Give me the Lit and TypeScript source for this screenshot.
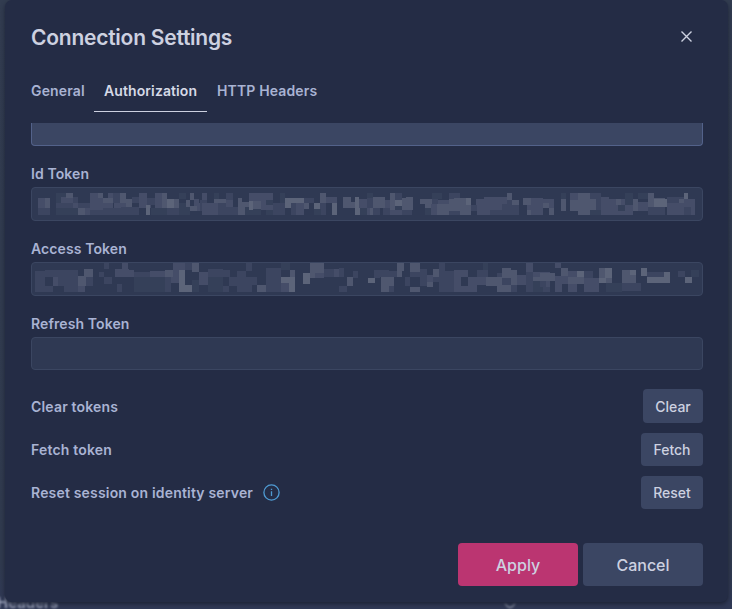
import { LitElement, html, svg, css } from "lit";
import { customElement, property, state } from "lit/decorators.js";

type Block = [number, number, number, number, number];
type Strip = { at: number; blocks: Block[] };

const SHADES = ["#2f3955", "#354059", "#3c4560", "#454d68", "#4f576f", "#5c6479"];

// Obscured token text. Blocks are [x, y, width, height, shade] in thirds of a pixel.
const ID_TOKEN: Strip[] = [
  { at: -24, blocks: [
    [42,54,36,51,2],[42,54,21,15,3],[63,54,15,30,4],[42,69,21,15,3],[42,84,36,21,2],[96,39,30,45,1],[96,69,15,15,2],[111,51,36,18,3],[126,39,21,15,4],[147,51,15,18,2],[111,69,51,15,2],[96,84,66,21,1],[147,69,14,15,3],[161,69,37,18,2],[161,84,22,21,4],[183,84,15,21,3],
    [198,39,39,51,3],[222,39,15,15,4],[237,54,30,15,4],[252,39,15,15,3],[267,39,20,30,2],[237,69,30,15,3],[198,90,39,15,2],[237,84,55,21,2],[288,39,18,30,4],[306,57,18,24,4],[270,69,36,15,3],[292,80,53,25,2],[324,51,21,18,2],[345,39,24,42,3],[345,69,36,15,3],[366,75,12,30,5],[369,54,24,21,2],[393,39,21,45,3],[414,39,15,45,4],[429,57,21,27,5],[450,57,15,27,4],[381,84,48,21,1],[429,84,36,21,2],[465,39,21,18,1],[465,69,33,15,1],[486,60,12,21,4],[498,39,12,21,4],[510,57,15,21,3],[498,78,21,15,4],[519,69,15,24,3],[465,84,33,21,1]] },
  { at: 504, blocks: [
    [6,39,15,30,3],[0,60,21,33,2],[6,69,48,36,3],[42,39,15,18,1],[42,57,36,12,4],[78,39,21,21,2],[78,60,21,21,3],[54,69,24,36,2],[78,81,36,24,2],[114,54,12,51,4],[126,66,24,15,4],[126,81,9,24,4],[135,81,48,24,1],[147,39,12,24,3],[147,63,12,27,5],[159,39,24,24,3],[159,63,24,24,4],[183,39,15,51,3],[198,39,21,21,3],[198,60,21,15,1],[198,75,21,15,3],[198,90,21,15,1],[219,69,36,36,2],[240,39,15,30,1],[255,54,18,30,5],[273,54,39,15,5],[273,69,15,36,2],[288,69,24,36,3],[312,54,30,15,2],[312,69,15,18,4],[342,69,18,18,5],[360,39,18,30,4],[378,51,33,18,3],[360,69,18,36,2],[342,87,20,18,1],[396,69,15,36,5],[429,51,24,32,4],[453,66,12,18,4],[465,51,12,33,5],[477,57,24,27,3],[465,84,15,21,5],[480,84,21,21,1],[501,39,18,15,1],[501,54,18,30,2],[501,84,18,21,3],[519,51,21,33,5],[519,84,21,21,2]] },
  { at: 1014, blocks: [
    [0,84,9,21,4],[9,51,36,33,4],[45,60,15,24,3],[60,39,15,51,4],[75,39,21,21,2],[75,60,33,18,5],[96,54,33,36,4],[108,51,21,15,4],[75,78,21,12,1],[60,90,36,15,3],[39,84,21,21,2],[96,90,30,15,2],[150,57,36,14,4],[165,71,21,13,4],[186,39,30,18,1],[186,57,18,15,2],[204,60,33,12,3],[165,84,21,21,1],[183,72,18,33,3],[201,72,36,33,4],[237,39,33,18,2],[237,57,24,36,4],[252,54,36,39,4],[270,54,33,51,4],[288,54,15,21,5],[237,93,33,12,2],[318,57,24,18,3],[342,51,69,24,3],[411,39,15,21,4],[426,60,21,15,4],[411,60,15,15,2],[303,75,18,18,2],[321,75,21,30,3],[342,72,54,18,3],[396,72,15,18,2],[342,90,18,15,3],[360,90,51,15,2],[411,75,36,30,2],[459,54,24,21,4],[483,54,36,51,3],[471,75,12,15,3],[471,90,12,15,4],[519,57,21,12,2],[519,69,18,15,4]] },
  { at: 1524, blocks: [
    [0,54,9,51,3],[9,57,33,27,3],[9,69,18,15,4],[27,84,15,21,4],[63,57,15,36,4],[63,39,15,18,1],[90,39,24,21,3],[90,60,24,33,4],[114,39,36,36,4],[114,66,36,39,4],[150,57,18,33,4],[150,39,33,18,2],[168,57,15,33,2],[150,90,33,15,1],[183,51,24,24,3],[183,75,51,30,3],[207,57,21,18,3],[228,57,15,18,4],[243,57,12,18,3],[234,75,21,18,1],[234,93,45,12,3],[255,39,24,36,1],[255,75,24,18,3],[279,57,15,36,4],[294,66,30,27,3],[294,39,30,18,1],[324,39,18,18,4],[324,54,51,26,4],[342,57,39,23,5],[324,80,51,25,2],[381,51,51,18,2],[381,69,51,36,3],[417,57,15,12,4],[432,39,12,18,5],[432,57,12,24,3],[444,57,21,24,3],[432,81,21,24,2],[453,81,12,24,3]] },
];

const ACCESS_TOKEN: Strip[] = [
  { at: -24, blocks: [
    [33,273,30,63,2],[63,270,87,21,2],[87,291,15,27,3],[63,318,24,18,2],[102,291,60,27,2],[120,270,42,66,2],[162,288,24,30,4],[180,267,27,24,4],[186,291,21,27,2],[162,318,21,18,3],[240,249,15,18,2],[225,276,15,15,2],[240,291,24,21,2],[294,249,18,21,3],[273,267,42,24,3],[315,270,15,21,3],[330,276,48,15,2],[378,273,45,18,3],[279,312,15,24,2],[330,291,93,45,1],[423,270,24,21,4],[447,249,36,21,3],[423,291,18,45,2],[441,291,24,18,3],[465,270,18,45,5],[483,249,21,21,2],[447,270,18,39,3],[465,315,39,21,5],[504,249,21,27,4],[504,300,21,36,1],[525,276,15,39,3]] },
  { at: 504, blocks: [
    [0,276,24,39,3],[24,267,45,24,2],[24,291,45,45,1],[69,270,21,21,2],[69,318,18,18,2],[87,291,24,27,2],[111,273,27,63,2],[138,249,18,24,2],[138,291,18,45,2],[156,291,15,24,2],[171,315,27,21,4],[198,264,45,27,2],[198,291,45,45,2],[243,249,27,21,1],[270,270,15,21,4],[243,291,42,18,5],[243,309,24,27,3],[267,309,18,27,5],[309,279,21,33,5],[330,249,42,30,4],[330,279,15,15,4],[345,279,27,15,3],[372,267,30,24,2],[402,267,15,24,3],[417,264,15,27,2],[459,273,15,21,2],[441,291,18,27,4],[417,318,24,18,2],[504,294,21,15,5],[522,270,18,24,2]] },
  { at: 1014, blocks: [
    [12,270,45,21,2],[57,273,24,18,2],[81,249,21,24,4],[81,273,15,18,4],[33,291,24,45,4],[57,291,15,27,4],[57,318,15,18,2],[120,249,30,27,4],[120,276,30,15,2],[105,291,15,27,2],[150,267,21,51,2],[120,321,30,15,4],[171,285,18,21,3],[171,306,18,15,4],[189,267,18,24,4],[189,291,18,15,2],[207,249,18,42,2],[207,291,45,45,2],[225,273,27,18,2],[252,270,42,21,3],[252,288,21,30,3],[252,318,69,18,3],[294,291,27,27,3],[321,270,33,21,2],[339,249,15,21,1],[321,291,27,24,3],[348,291,48,27,4],[381,279,15,12,2],[396,264,27,30,4],[396,294,27,21,2],[423,270,18,45,4],[381,315,42,21,4],[441,285,27,30,3],[423,315,18,21,2],[468,249,21,27,3],[489,276,51,15,3],[489,291,51,12,4],[468,276,21,60,2],[489,303,30,33,1],[519,303,21,18,3],[519,321,21,15,2]] },
  { at: 1524, blocks: [
    [0,279,45,24,4],[0,303,18,18,2],[45,249,18,15,3],[45,288,21,48,3],[63,264,21,24,4],[84,273,30,18,3],[66,288,18,24,3],[84,291,27,21,4],[111,273,21,18,5],[111,291,21,21,4],[84,312,27,24,3],[132,273,27,21,2],[132,294,45,42,3],[177,264,18,30,4],[195,264,21,30,5],[177,294,21,15,5],[198,294,18,15,4],[246,270,24,39,4],[270,270,18,15,5],[270,285,18,24,4],[246,309,57,24,2],[303,264,18,24,5],[321,276,51,15,2],[321,291,51,18,5],[372,276,18,33,5],[414,273,21,18,2],[435,291,21,18,5],[453,270,24,21,1],[198,309,48,27,1]] },
];

@customElement("token-field")
class TokenField extends LitElement {
  @property() label = "";
  @property({ type: Number }) originY = 0;
  @property({ attribute: false }) strips: Strip[] = [];

  static styles = css`
    :host { display: block; height: 75px; box-sizing: border-box; }
    .label { height: 27px; line-height: 27px; font-size: 14px; font-weight: 560; letter-spacing: 0.1px; color: #a9b3d3; display: block; }
    .box { box-sizing: border-box; height: 34px; border: 1px solid #3b4661; border-radius: 4px; background: #2f3953; }
    .box.empty { height: 33px; }
    svg { display: block; width: 670px; height: 32px; }
  `;

  render() {
    return html`
      <label class="label">${this.label}</label>
      <div class="box ${this.strips.length ? "" : "empty"}">
        ${this.strips.length
          ? html`<svg viewBox="0 0 2010 96" shape-rendering="crispEdges" aria-hidden="true">
              ${this.strips.map((s) => s.blocks.map(([x, y, w, h, shade]) =>
                svg`<rect x=${s.at + x} y=${y - this.originY} width=${w} height=${h} fill=${SHADES[shade]}></rect>`))}
            </svg>`
          : null}
      </div>
    `;
  }
}

@customElement("app-root")
class AppRoot extends LitElement {
  @state() private tab = "Authorization";

  static styles = css`
    :host {
      display: block; position: relative; width: 732px; height: 609px; overflow: hidden;
      background: linear-gradient(#323c50 0, #303a4e 560px, #303955 600px);
      font-family: Inter, "Liberation Sans", sans-serif; color: #cdd1e0;
    }
    .behind { position: absolute; left: -3px; top: 594px; font-size: 15px; line-height: 18px; font-weight: 600; color: #a0a7bd; filter: blur(1px); }
    .behind-mark { position: absolute; left: 502px; top: 598px; width: 16px; height: 12px; filter: blur(0.8px); }
    .modal {
      position: relative; box-sizing: border-box; margin-left: 5px; width: 723px; height: 602px; padding: 0 25px 0 26px;
      background: #242c45; border-radius: 7px; box-shadow: 0 2px 4px #1c2335;
      display: flex; flex-direction: column;
    }
    header { height: 74px; display: flex; align-items: center; justify-content: space-between; }
    h1 { margin: 2px 0 0; font-size: 21px; line-height: 26px; font-weight: 580; letter-spacing: -0.24px; }
    .close { display: flex; padding: 0; margin: 0 10px 2px 0; border: 0; background: none; }
    nav { display: flex; height: 38px; }
    .tab {
      box-sizing: border-box; height: 38px; padding: 0 10px 4px; border: 0; border-bottom: 1px solid transparent;
      background: none; font: 560 14px/33px Inter, sans-serif; letter-spacing: 0.14px; color: #a9b3d3; white-space: nowrap;
    }
    .tab:first-child { padding-left: 0; width: 63px; text-align: left; }
    .tab.active { width: 113px; font-weight: 600; letter-spacing: 0.1px; color: #d5d9e6; border-bottom-color: #cdd1e0; }
    .body { margin-top: 11px; height: 387px; overflow: hidden; }
    .cut { box-sizing: border-box; height: 23px; margin-bottom: 14px; border: 1px solid #53628a; border-top: 0; border-radius: 0 0 4px 4px; background: #3b4663; }
    .rows { margin-top: 4px; }
    .row { display: flex; height: 43px; align-items: flex-start; justify-content: space-between; }
    .text { display: flex; align-items: center; gap: 10px; height: 34px; font-size: 14px; font-weight: 560; letter-spacing: 0.18px; color: #a9b3d3; }
    .small { height: 33px; margin-top: 1px; min-width: 60px; border: 0; border-radius: 4px; background: #3b4663; color: #cdd1e0; font: 520 14px Inter, sans-serif; padding: 0 11px; }
    .tall { height: 34px; margin-top: 0; }
    .wide { width: 62px; }
    footer { display: flex; justify-content: flex-end; gap: 5px; margin-top: 33px; }
    .big { width: 120px; height: 43px; padding: 0; border: 0; border-radius: 4px; background: #3b4663; color: #cdd1e0; font: 500 16px Inter, sans-serif; }
    .primary { background: #bb3571; }
  `;

  render() {
    return html`
      <div class="behind">Headers</div>
      <svg class="behind-mark" viewBox="0 0 16 12" fill="none" stroke="#9299ab" stroke-width="1.5"><path d="M3 5 Q8 14 13 5"></path></svg>
      <div class="modal">
        <header>
          <h1>Connection Settings</h1>
          <button class="close" aria-label="Close">
            <svg width="13" height="13" viewBox="0 0 13 13" fill="none" stroke="#cdd1e0" stroke-width="1.4"><path d="M1.5 1.5 11.5 11.5M11.5 1.5 1.5 11.5"></path></svg>
          </button>
        </header>
        <nav>
          ${["General", "Authorization", "HTTP Headers"].map((t) => html`
            <button class="tab ${t === this.tab ? "active" : ""}" @click=${() => (this.tab = t)}>${t}</button>`)}
        </nav>
        <div class="body">
          <div class="cut"></div>
          <token-field label="Id Token" .originY=${24} .strips=${ID_TOKEN}></token-field>
          <token-field label="Access Token" .originY=${249} .strips=${ACCESS_TOKEN}></token-field>
          <token-field label="Refresh Token"></token-field>
          <div class="rows">
            <div class="row"><span class="text">Clear tokens</span><button class="small tall">Clear</button></div>
            <div class="row"><span class="text">Fetch token</span><button class="small wide">Fetch</button></div>
            <div class="row">
              <span class="text">Reset session on identity server
                <svg width="17" height="17" viewBox="0 0 17 17" fill="none" stroke="#4f9bd3" stroke-width="1.3"><circle cx="8.5" cy="8.5" r="7.6"></circle><path d="M8.5 7.3V12M8.5 4.8V6.1"></path></svg>
              </span>
              <button class="small wide">Reset</button>
            </div>
          </div>
        </div>
        <footer>
          <button class="big primary">Apply</button>
          <button class="big">Cancel</button>
        </footer>
      </div>
    `;
  }
}
